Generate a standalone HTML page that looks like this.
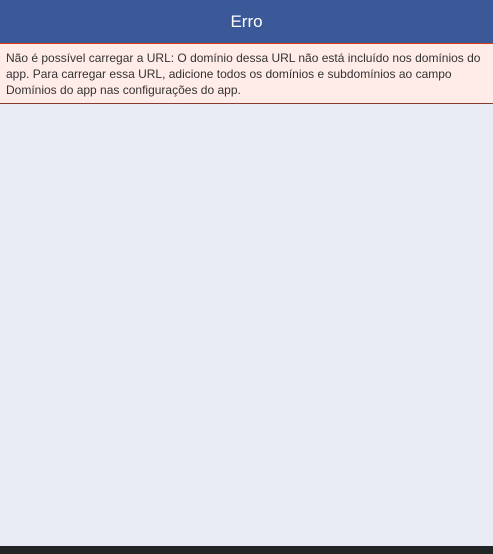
<!DOCTYPE html><html><head><style>
body{margin:0;width:493px;height:554px;background:#e9ecf5;font-family:"Liberation Sans",Arial,sans-serif;position:relative;overflow:hidden}
.h{height:43px;background:#3b5998;color:#fff;font-size:17px;text-align:center;line-height:43px}
.e{background:#ffebe8;border-top:1px solid #dd3c10;border-bottom:1px solid #8b3a2e;padding:6px 6px 5px;font-size:12px;line-height:16px;color:#333;height:48px}
.f{position:absolute;left:0;right:0;bottom:0;height:8px;background:#232425}
</style></head><body>
<div class="h">Erro</div>
<div class="e">Não é possível carregar a URL: O domínio dessa URL não está incluído nos domínios do app. Para carregar essa URL, adicione todos os domínios e subdomínios ao campo Domínios do app nas configurações do app.</div>
<div class="f"></div>
</body></html>
